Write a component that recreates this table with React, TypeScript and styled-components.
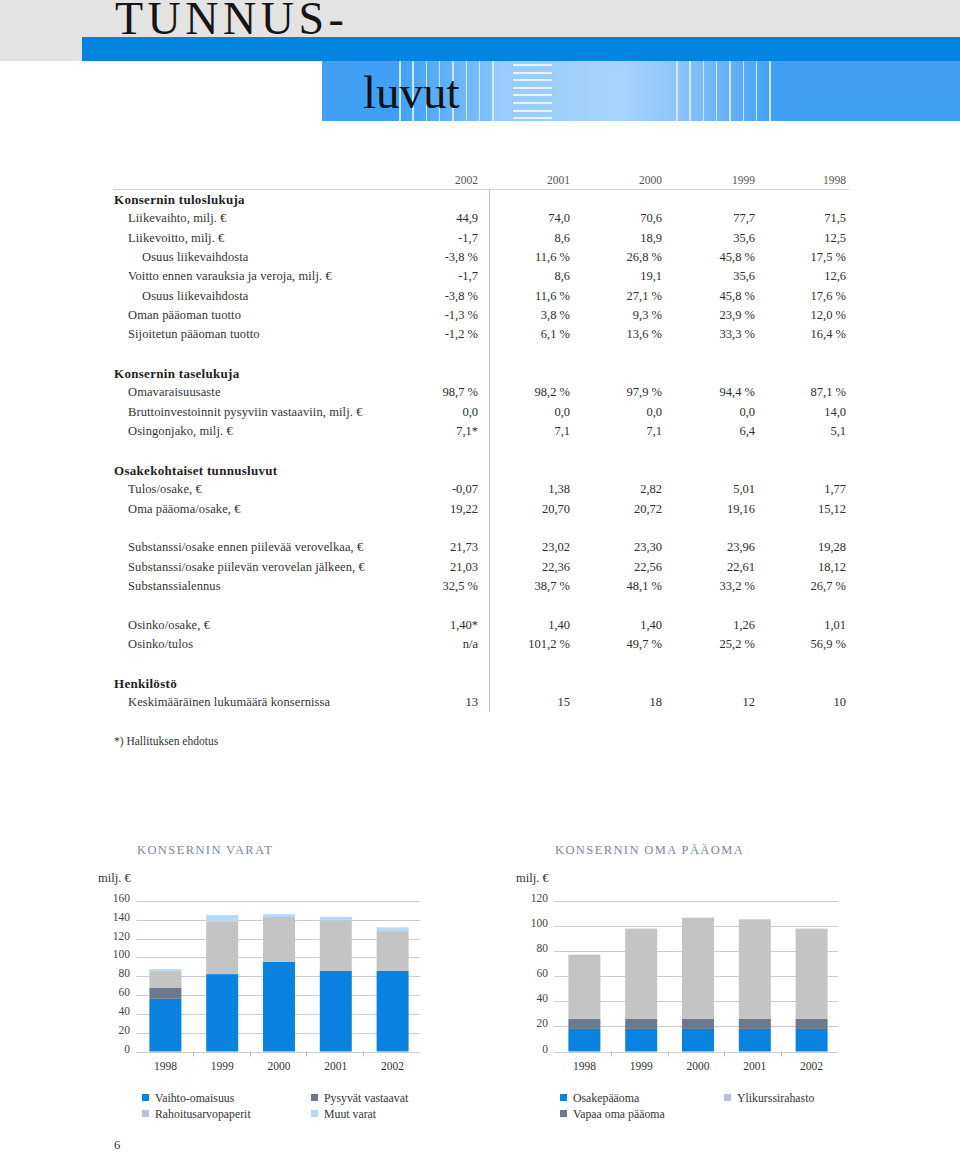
import React from "react";
import styled, { createGlobalStyle } from "styled-components";

const Global = createGlobalStyle`
  html, body { margin: 0; padding: 0; background: #fff; overflow: hidden; }
  body { font-family: "Liberation Serif", "Times New Roman", serif; color: #2e2e2e; }
`;

const Page = styled.div`
  width: 960px;
  height: 1152px;
  overflow: hidden;
  display: flex;
  flex-direction: column;
`;

const Masthead = styled.header`
  background: #e3e3e3;
  height: 61px;
  display: flex;
  flex-direction: column;
`;

const Title = styled.h1`
  margin: 0;
  height: 37px;
  padding-left: 115px;
  font-weight: 400;
  font-size: 46px;
  line-height: 37px;
  letter-spacing: 4.5px;
  color: #151515;
`;

const BlueBar = styled.div`
  margin-left: 82px;
  height: 24px;
  background: #0084e0;
`;

const Panel = styled.div`
  margin-left: 322px;
  height: 60px;
  padding: 2px 0 0 41px;
  box-sizing: border-box;
  font-size: 47px;
  line-height: 58px;
  color: #111;
  background:
    repeating-linear-gradient(90deg, rgba(212, 235, 255, 0.95) 0 1.5px, transparent 1.5px 13.3px) 77px 0 / 95px 100% no-repeat,
    repeating-linear-gradient(90deg, rgba(212, 235, 255, 0.95) 0 1.5px, transparent 1.5px 13.3px) 354px 0 / 95px 100% no-repeat,
    repeating-linear-gradient(180deg, transparent 0 3px, #e6f3ff 3px 5px, transparent 5px 7.6px) 191px 0 / 39px 100% no-repeat,
    linear-gradient(90deg, #40a0f6 0 77px, #82c1fa 170px, #97cbfb 172px, #a6d4fc 300px, #8ec5fa 354px, #45a2f6 447px, #40a0f6 447px);
`;

const Table = styled.section`
  margin: 50px 0 0 114px;
  width: 734px;
`;

const cols = "286px 78px 92px 92px 93px 91px";

const HeadRow = styled.div`
  display: grid;
  grid-template-columns: ${cols};
  height: 18px;
  line-height: 18px;
  font-size: 11.5px;
  color: #555;
  border-bottom: 1px solid #c6ced6;
  margin-left: -1px;
  padding-left: 1px;
  width: 735px;
`;

const Body = styled.div`
  background: linear-gradient(#bccad6, #bccad6) no-repeat 375px 0 / 1px 100%;
`;

const Row = styled.div`
  display: grid;
  grid-template-columns: ${cols};
  height: 19.35px;
  line-height: 19.35px;
  font-size: 12.5px;
  color: #2e2e2e;
`;

const Label = styled.div<{ $level: number }>`
  padding-left: ${(p) => p.$level * 14}px;
  font-weight: ${(p) => (p.$level === 0 ? 700 : 400)};
  font-size: ${(p) => (p.$level === 0 ? 13 : 12.5)}px;
  letter-spacing: ${(p) => (p.$level === 0 ? 0.3 : 0.1)}px;
  white-space: nowrap;
  color: ${(p) => (p.$level === 0 ? "#1e1e1e" : "#333")};
`;

const Num = styled.div`
  text-align: right;
  white-space: nowrap;
`;

const Footnote = styled.div`
  margin-top: 19.35px;
  font-size: 11.5px;
  line-height: 19.35px;
  color: #333;
`;

const Charts = styled.section`
  margin: 91px 0 0 98px;
  display: grid;
  grid-template-columns: 330px 330px;
  column-gap: 88px;
`;

const ChartBox = styled.div`
  display: flex;
  flex-direction: column;
`;

const ChartTitle = styled.h2`
  margin: 0;
  padding-left: 39px;
  font-weight: 400;
  font-size: 12.5px;
  line-height: 16px;
  letter-spacing: 1.4px;
  color: #7a879b;
`;

const ChartSvg = styled.svg`
  display: block;
  margin-top: 12px;
  font-family: "Liberation Serif", "Times New Roman", serif;
`;

const Legend = styled.div<{ $col: number }>`
  margin-top: 14px;
  padding-left: 44px;
  display: grid;
  grid-template-columns: ${(p) => p.$col}px auto;
  grid-auto-rows: 16px;
  font-size: 11.8px;
  line-height: 16px;
  color: #333;
`;

const LegendItem = styled.div`
  display: flex;
  align-items: center;
  gap: 6px;
  white-space: nowrap;
`;

const Swatch = styled.span<{ $c: string }>`
  width: 7px;
  height: 7px;
  background: ${(p) => p.$c};
  flex: none;
`;

const PageNum = styled.div`
  margin: 15px 0 0 114px;
  font-size: 12.5px;
  line-height: 16px;
  color: #333;
`;

type RowDef = { label?: string; level?: number; vals?: string[] };

const rows: RowDef[] = [
  { label: "Konsernin tuloslukuja", level: 0 },
  { label: "Liikevaihto, milj. €", level: 1, vals: ["44,9", "74,0", "70,6", "77,7", "71,5"] },
  { label: "Liikevoitto, milj. €", level: 1, vals: ["-1,7", "8,6", "18,9", "35,6", "12,5"] },
  { label: "Osuus liikevaihdosta", level: 2, vals: ["-3,8 %", "11,6 %", "26,8 %", "45,8 %", "17,5 %"] },
  { label: "Voitto ennen varauksia ja veroja, milj. €", level: 1, vals: ["-1,7", "8,6", "19,1", "35,6", "12,6"] },
  { label: "Osuus liikevaihdosta", level: 2, vals: ["-3,8 %", "11,6 %", "27,1 %", "45,8 %", "17,6 %"] },
  { label: "Oman pääoman tuotto", level: 1, vals: ["-1,3 %", "3,8 %", "9,3 %", "23,9 %", "12,0 %"] },
  { label: "Sijoitetun pääoman tuotto", level: 1, vals: ["-1,2 %", "6,1 %", "13,6 %", "33,3 %", "16,4 %"] },
  {},
  { label: "Konsernin taselukuja", level: 0 },
  { label: "Omavaraisuusaste", level: 1, vals: ["98,7 %", "98,2 %", "97,9 %", "94,4 %", "87,1 %"] },
  { label: "Bruttoinvestoinnit pysyviin vastaaviin, milj. €", level: 1, vals: ["0,0", "0,0", "0,0", "0,0", "14,0"] },
  { label: "Osingonjako, milj. €", level: 1, vals: ["7,1*", "7,1", "7,1", "6,4", "5,1"] },
  {},
  { label: "Osakekohtaiset tunnusluvut", level: 0 },
  { label: "Tulos/osake, €", level: 1, vals: ["-0,07", "1,38", "2,82", "5,01", "1,77"] },
  { label: "Oma pääoma/osake, €", level: 1, vals: ["19,22", "20,70", "20,72", "19,16", "15,12"] },
  {},
  { label: "Substanssi/osake ennen piilevää verovelkaa, €", level: 1, vals: ["21,73", "23,02", "23,30", "23,96", "19,28"] },
  { label: "Substanssi/osake piilevän verovelan jälkeen, €", level: 1, vals: ["21,03", "22,36", "22,56", "22,61", "18,12"] },
  { label: "Substanssialennus", level: 1, vals: ["32,5 %", "38,7 %", "48,1 %", "33,2 %", "26,7 %"] },
  {},
  { label: "Osinko/osake, €", level: 1, vals: ["1,40*", "1,40", "1,40", "1,26", "1,01"] },
  { label: "Osinko/tulos", level: 1, vals: ["n/a", "101,2 %", "49,7 %", "25,2 %", "56,9 %"] },
  {},
  { label: "Henkilöstö", level: 0 },
  { label: "Keskimääräinen lukumäärä konsernissa", level: 1, vals: ["13", "15", "18", "12", "10"] },
];

const BLUE = "#0a83e0";
const SLATE = "#6b798b";
const GRAY = "#c4c4c5";
const LIGHT = "#b7d9f7";
const LAV = "#b8c3d9";

type Seg = { to: number; c: string };
type BarDef = { year: string; segs: Seg[] };

const assets: BarDef[] = [
  { year: "1998", segs: [{ to: 56, c: BLUE }, { to: 68, c: SLATE }, { to: 85.5, c: GRAY }, { to: 87.6, c: LIGHT }] },
  { year: "1999", segs: [{ to: 82.3, c: BLUE }, { to: 138.5, c: GRAY }, { to: 145, c: LIGHT }] },
  { year: "2000", segs: [{ to: 95.3, c: BLUE }, { to: 143, c: GRAY }, { to: 146, c: LIGHT }] },
  { year: "2001", segs: [{ to: 85.8, c: BLUE }, { to: 139.5, c: GRAY }, { to: 143, c: LIGHT }] },
  { year: "2002", segs: [{ to: 85.8, c: BLUE }, { to: 128, c: GRAY }, { to: 132, c: LIGHT }] },
];

const equity: BarDef[] = [
  { year: "1998", segs: [{ to: 18, c: BLUE }, { to: 26, c: SLATE }, { to: 77.2, c: GRAY }] },
  { year: "1999", segs: [{ to: 18, c: BLUE }, { to: 26, c: SLATE }, { to: 98, c: GRAY }] },
  { year: "2000", segs: [{ to: 18, c: BLUE }, { to: 26, c: SLATE }, { to: 106.7, c: GRAY }] },
  { year: "2001", segs: [{ to: 18, c: BLUE }, { to: 26, c: SLATE }, { to: 105.4, c: GRAY }] },
  { year: "2002", segs: [{ to: 18, c: BLUE }, { to: 26, c: SLATE }, { to: 98, c: GRAY }] },
];

const TOP = 31;
const BOTTOM = 181.5;
const GX0 = 38;
const GX1 = 322;

function BarChart({ max, bars, shift }: { max: number; bars: BarDef[]; shift: number }) {
  const y = (v: number) => BOTTOM - (v / max) * (BOTTOM - TOP);
  const slot = (GX1 - GX0) / bars.length;
  const ticks: number[] = [];
  for (let v = 0; v <= max; v += 20) ticks.push(v);
  return (
    <ChartSvg width={330} height={206} viewBox="0 0 330 206">
      <text x={0} y={12} fontSize={12.5} fill="#333">milj. €</text>
      {ticks.map((v) => (
        <g key={v}>
          <line x1={GX0} x2={GX1} y1={Math.round(y(v)) + 0.5} y2={Math.round(y(v)) + 0.5} stroke="#c9cdd2" strokeWidth={1} />
          <text x={32} y={y(v) + 1} fontSize={11.5} fill="#444" textAnchor="end">{v}</text>
        </g>
      ))}
      {bars.map((b, i) => {
        const cx = GX0 + slot * (i + 0.5) + shift;
        let prev = 0;
        return (
          <g key={b.year}>
            {b.segs.map((s, j) => {
              const r = <rect key={j} x={cx - 16} y={y(s.to)} width={32} height={y(prev) - y(s.to)} fill={s.c} />;
              prev = s.to;
              return r;
            })}
            <text x={cx} y={200} fontSize={11.5} fill="#333" textAnchor="middle">{b.year}</text>
          </g>
        );
      })}
      {bars.slice(1).map((_, i) => {
        const x = Math.round(GX0 + slot * (i + 1)) + 0.5;
        return <line key={i} x1={x} x2={x} y1={BOTTOM} y2={BOTTOM + 5} stroke="#b8bcc2" strokeWidth={1} />;
      })}
    </ChartSvg>
  );
}

export default function App() {
  return (
    <Page>
      <Global />
      <Masthead>
        <Title>TUNNUS-</Title>
        <BlueBar />
      </Masthead>
      <Panel>luvut</Panel>

      <Table>
        <HeadRow>
          <div />
          {["2002", "2001", "2000", "1999", "1998"].map((y) => (
            <Num key={y}>{y}</Num>
          ))}
        </HeadRow>
        <Body>
          {rows.map((r, i) => (
            <Row key={i}>
              <Label $level={r.level ?? 1}>{r.label ?? ""}</Label>
              {(r.vals ?? ["", "", "", "", ""]).map((v, j) => (
                <Num key={j}>{v}</Num>
              ))}
            </Row>
          ))}
        </Body>
        <Footnote>*) Hallituksen ehdotus</Footnote>
      </Table>

      <Charts>
        <ChartBox>
          <ChartTitle>KONSERNIN VARAT</ChartTitle>
          <BarChart max={160} bars={assets} shift={1} />
          <Legend $col={169}>
            <LegendItem><Swatch $c={BLUE} />Vaihto-omaisuus</LegendItem>
            <LegendItem><Swatch $c={SLATE} />Pysyvät vastaavat</LegendItem>
            <LegendItem><Swatch $c={LAV} />Rahoitusarvopaperit</LegendItem>
            <LegendItem><Swatch $c={LIGHT} />Muut varat</LegendItem>
          </Legend>
        </ChartBox>
        <ChartBox>
          <ChartTitle>KONSERNIN OMA PÄÄOMA</ChartTitle>
          <BarChart max={120} bars={equity} shift={2} />
          <Legend $col={164}>
            <LegendItem><Swatch $c={BLUE} />Osakepääoma</LegendItem>
            <LegendItem><Swatch $c={LAV} />Ylikurssirahasto</LegendItem>
            <LegendItem><Swatch $c={SLATE} />Vapaa oma pääoma</LegendItem>
          </Legend>
        </ChartBox>
      </Charts>

      <PageNum>6</PageNum>
    </Page>
  );
}
